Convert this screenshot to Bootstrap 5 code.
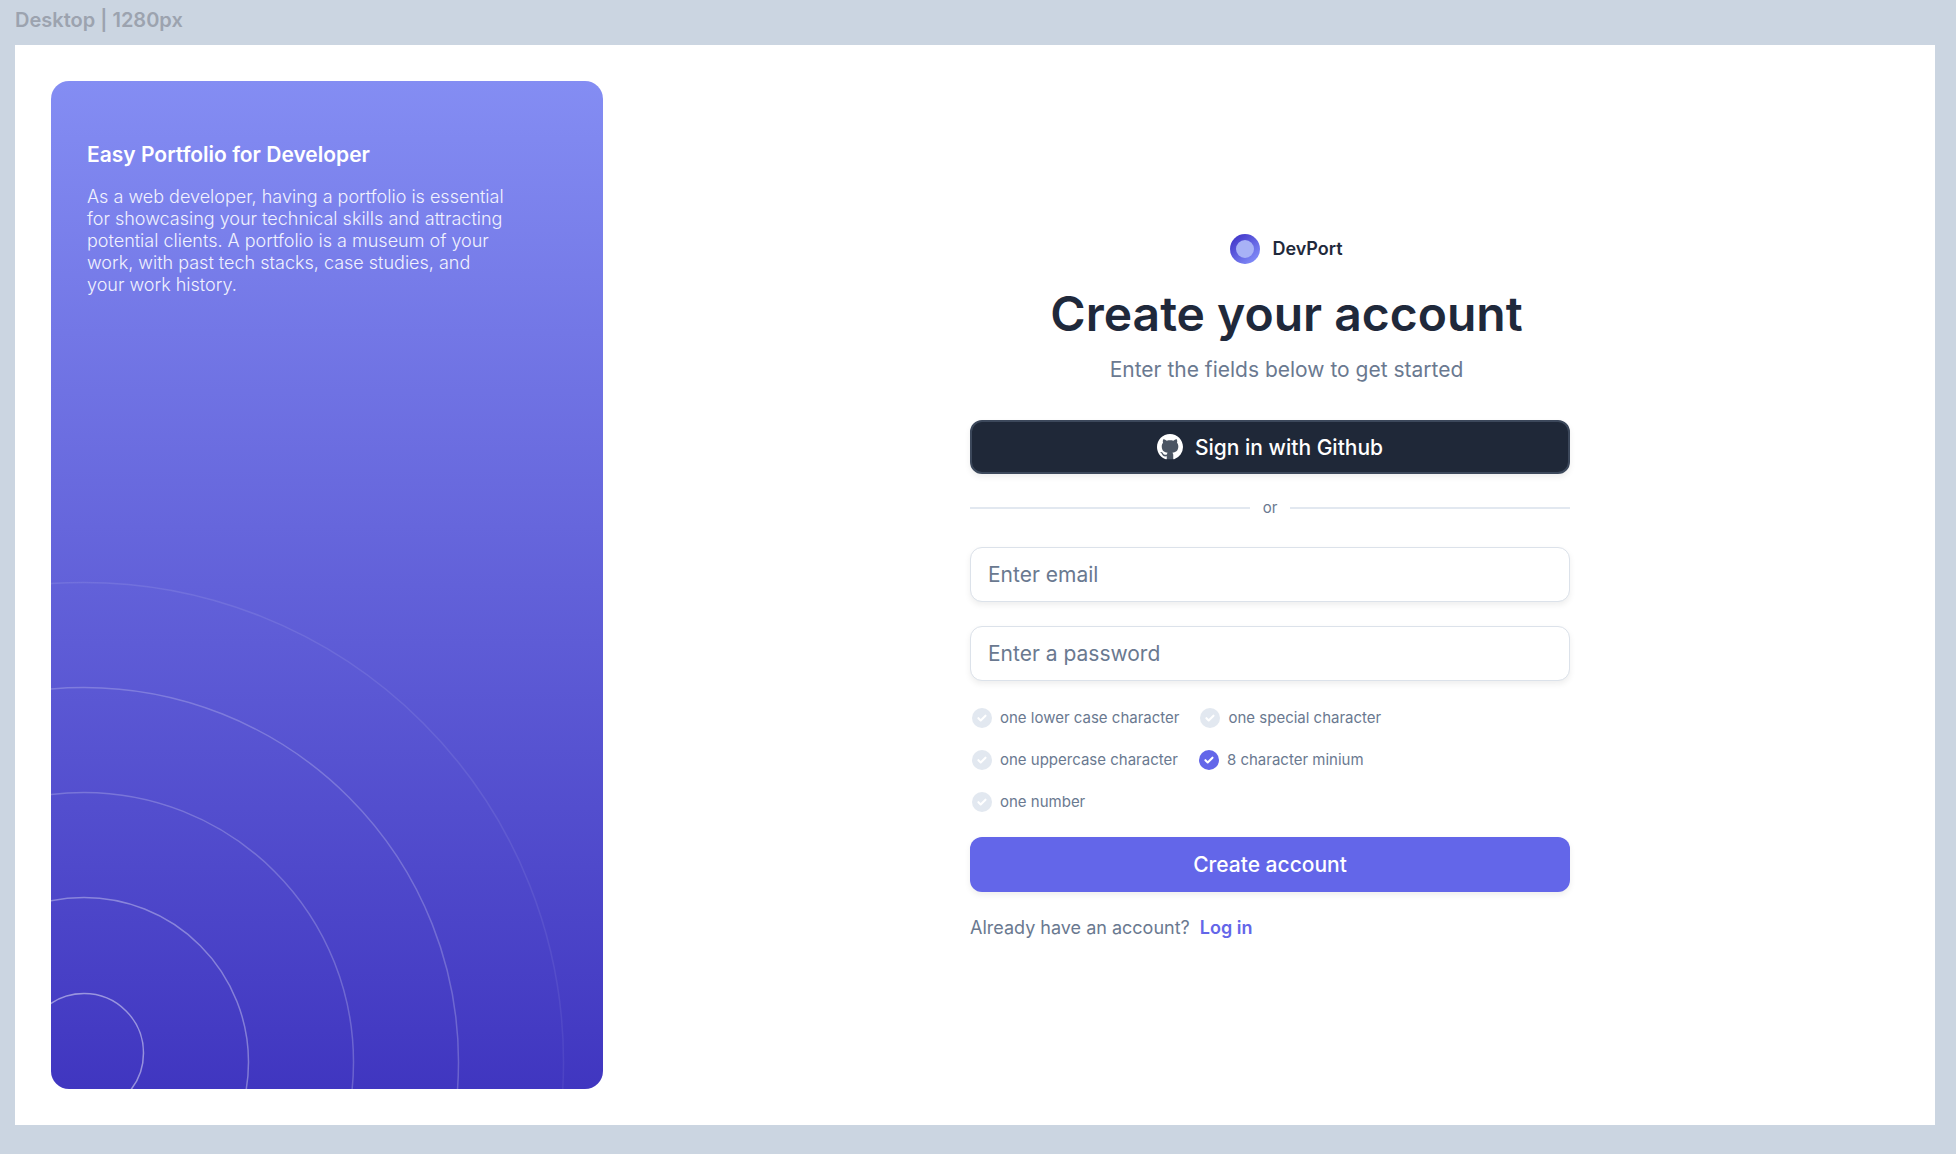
<!DOCTYPE html>
<html lang="en">
<head>
<meta charset="utf-8">
<meta name="viewport" content="width=device-width, initial-scale=1">
<title>DevPort – Create your account</title>
<link href="https://cdn.jsdelivr.net/npm/bootstrap@5.3.0/dist/css/bootstrap.min.css" rel="stylesheet">
<style>
  :root { --ink: #1f293b; --slate: #6a7990; --line: #e2e8f0; --brand: #6366e9; }
  body { font-family: Inter, "Liberation Sans", sans-serif; background: #cbd5e1; color: var(--ink); }
  .board { padding: 0 21px 29px 15px; }
  .board-label { height: 45px; padding-top: 8px; font-size: 20px; line-height: 24px; font-weight: 600; color: #9ca3af; }
  .frame { background: #fff; padding: 36px 0 36px 36px; }
  .promo { flex: 0 1 552px; border-radius: 18px; padding: 61px 36px; color: #fff;
    background: linear-gradient(180deg, #848df3 0%, #6261d9 50%, #4036c0 100%); }
  .promo h2 { font-size: 21px; line-height: 26px; font-weight: 600; margin: 0 0 18px; }
  .promo p { font-size: 18px; line-height: 22px; font-weight: 300; max-width: 422px; margin: 0; color: #f1f2fe; }
  .rings { position: absolute; left: 0; bottom: 0; }
  .form-side { padding-left: 2px; }
  .signup { width: 600px; max-width: 100%; padding-top: 3px; }
  .intro { padding-left: 33px; }
  .brand-name { font-size: 18px; line-height: 30px; font-weight: 600; }
  .intro h1 { font-size: 48px; line-height: 58px; font-weight: 600; margin: 21px 0 14px; }
  .intro p { font-size: 21px; line-height: 25px; color: var(--slate); margin-bottom: 38px; }
  .signup .btn { border-radius: 12px; font-size: 21px; line-height: 25px; font-weight: 500; color: #fff;
    box-shadow: 0 3px 6px rgba(0,0,0,.07); }
  .btn-github { height: 54px; background: #1f2838; border: 2px solid #3c485b; }
  .btn-create { height: 55px; background: var(--brand); border: 0; }
  .signup .btn-github:hover { background: #334155; }
  .signup .btn-create:hover { background: #4f46e5; }
  .divider { gap: 13px; margin: 25px 0 30px; font-size: 15px; line-height: 18px; color: var(--slate); }
  .divider span.rule { height: 2px; background: var(--line); flex: 1 1 0; }
  .signup .form-control { border: 1px solid #dce2ea; border-radius: 12px; padding: 11px 17px 10px;
    font-size: 21px; line-height: 32px; min-height: 55px; margin-bottom: 24px; box-shadow: 0 3px 6px rgba(0,0,0,.07); }
  .signup .form-control::placeholder { color: var(--slate); opacity: 1; line-height: 32px; }
  .rules { gap: 22px; margin: 27px 0 25px; padding-left: 2px; }
  .rules .rule-row { gap: 21px; }
  .rules .form-check { min-height: 20px; gap: 8px; padding: 0; margin: 0; font-size: 15px; line-height: 20px; color: var(--slate); }
  .rules .form-check-input { width: 20px; height: 20px; margin: 0; border: 0; border-radius: 50%; float: none; flex: none;
    background: var(--line) center / 20px 20px no-repeat; }
  .rules .form-check-input:checked { background-color: var(--brand); }
  .rules .form-check-input, .rules .form-check-input:checked {
    background-size: 20px 20px;
    background-image: url("data:image/svg+xml,%3Csvg xmlns='http://www.w3.org/2000/svg' viewBox='0 0 20 20'%3E%3Cpath d='M6.4 10.2l2.3 2.2 4.8-4.7' fill='none' stroke='white' stroke-width='2.1' stroke-linecap='round' stroke-linejoin='round'/%3E%3C/svg%3E"); }
  .login-line { font-size: 18px; line-height: 22px; margin: 25px 0 0; gap: 10px; color: var(--slate); }
  .login-line a { font-weight: 600; color: var(--brand); }
</style>
</head>
<body>
<div class="board d-flex flex-column min-vh-100">
  <div class="board-label">Desktop | 1280px</div>
  <main class="frame d-flex flex-grow-1">
    <section class="promo position-relative overflow-hidden">
      <h2>Easy Portfolio for Developer</h2>
      <p>As a web developer, having a portfolio is essential for showcasing your technical skills and attracting potential clients. A portfolio is a museum of your work, with past tech stacks, case studies, and your work history.</p>
      <svg class="rings" width="552" height="508" viewBox="0 0 552 508" fill="none" stroke-width="1.5" aria-hidden="true">
        <defs>
          <linearGradient id="fade" gradientUnits="userSpaceOnUse" x1="0" y1="0" x2="0" y2="508">
            <stop offset="0" stop-color="#fff" stop-opacity=".1"/><stop offset="1" stop-color="#fff" stop-opacity=".06"/>
          </linearGradient>
        </defs>
        <circle cx="33" cy="472" r="59.5" stroke="#fff" stroke-opacity=".45"/>
        <circle cx="33" cy="481" r="164.5" stroke="#fff" stroke-opacity=".34"/>
        <circle cx="33" cy="481" r="269.5" stroke="#fff" stroke-opacity=".22"/>
        <circle cx="33" cy="481" r="374.5" stroke="#fff" stroke-opacity=".22"/>
        <circle cx="33" cy="481" r="479.5" stroke="url(#fade)"/>
      </svg>
    </section>
    <section class="form-side d-flex flex-grow-1 align-items-center justify-content-center">
      <form class="signup">
        <header class="intro text-center">
          <div class="d-flex justify-content-center align-items-center gap-2">
            <svg class="me-1" width="30" height="30" viewBox="0 0 30 30" aria-hidden="true">
              <defs><linearGradient id="orb" x1="0.15" y1="0.1" x2="0.85" y2="0.9"><stop offset="0" stop-color="#4338ca"/><stop offset="1" stop-color="#818cf8"/></linearGradient></defs>
              <circle cx="15" cy="15" r="15" fill="url(#orb)"/><circle cx="15" cy="15" r="9" fill="#a8b2f6"/>
            </svg>
            <span class="brand-name">DevPort</span>
          </div>
          <h1>Create your account</h1>
          <p>Enter the fields below to get started</p>
        </header>
        <button type="button" class="btn btn-github w-100 d-flex align-items-center justify-content-center gap-2">
          <svg class="me-1" width="26" height="26" viewBox="0 0 16 16" aria-hidden="true">
            <circle cx="8" cy="8" r="7.6" fill="#4b5563"/>
            <path fill="#fff" d="M8 0C3.58 0 0 3.58 0 8c0 3.54 2.29 6.53 5.47 7.59.4.07.55-.17.55-.38 0-.19-.01-.82-.01-1.49-2.01.37-2.53-.49-2.69-.94-.09-.23-.48-.94-.82-1.13-.28-.15-.68-.52-.01-.53.63-.01 1.08.58 1.23.82.72 1.21 1.87.87 2.33.66.07-.52.28-.87.51-1.07-1.78-.2-3.64-.89-3.64-3.95 0-.87.31-1.59.82-2.15-.08-.2-.36-1.02.08-2.12 0 0 .67-.21 2.2.82.64-.18 1.32-.27 2-.27s1.36.09 2 .27c1.53-1.04 2.2-.82 2.2-.82.44 1.1.16 1.92.08 2.12.51.56.82 1.27.82 2.15 0 3.07-1.87 3.75-3.65 3.95.29.25.54.73.54 1.48 0 1.07-.01 1.93-.01 2.2 0 .21.15.46.55.38A8.01 8.01 0 0 0 16 8c0-4.42-3.58-8-8-8z"/>
          </svg>
          Sign in with Github
        </button>
        <div class="divider d-flex align-items-center"><span class="rule"></span>or<span class="rule"></span></div>
        <label class="visually-hidden" for="email">Email</label>
        <input id="email" type="email" class="form-control" placeholder="Enter email">
        <label class="visually-hidden" for="password">Password</label>
        <input id="password" type="password" class="form-control" placeholder="Enter a password">
        <div class="rules d-flex flex-column">
          <div class="rule-row d-flex">
            <div class="form-check d-flex"><input class="form-check-input" type="checkbox" id="lower"><label for="lower">one lower case character</label></div>
            <div class="form-check d-flex"><input class="form-check-input" type="checkbox" id="special"><label for="special">one special character</label></div>
          </div>
          <div class="rule-row d-flex">
            <div class="form-check d-flex"><input class="form-check-input" type="checkbox" id="upper"><label for="upper">one uppercase character</label></div>
            <div class="form-check d-flex"><input class="form-check-input" type="checkbox" id="length" checked><label for="length">8 character minium</label></div>
          </div>
          <div class="rule-row d-flex">
            <div class="form-check d-flex"><input class="form-check-input" type="checkbox" id="number"><label for="number">one number</label></div>
          </div>
        </div>
        <button type="submit" class="btn btn-create w-100">Create account</button>
        <p class="login-line d-flex">Already have an account? <a class="text-decoration-none" href="#">Log in</a></p>
      </form>
    </section>
  </main>
</div>
<script src="https://cdn.jsdelivr.net/npm/bootstrap@5.3.0/dist/js/bootstrap.bundle.min.js"></script>
</body>
</html>
